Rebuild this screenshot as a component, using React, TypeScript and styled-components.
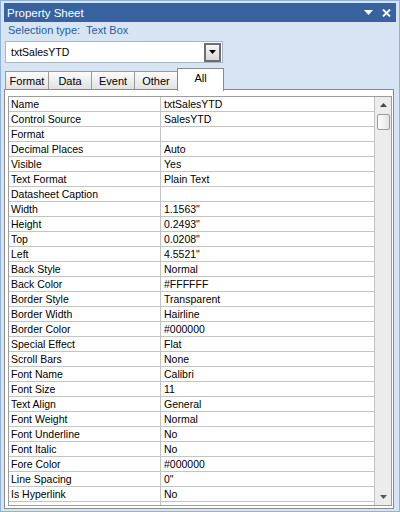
import styled, { createGlobalStyle } from "styled-components";

const GlobalStyle = createGlobalStyle`
  html, body {
    margin: 0;
    padding: 0;
    background: #d7e4f3;
  }
  * {
    box-sizing: border-box;
  }
`;

const properties: [string, string][] = [
  ["Name", "txtSalesYTD"],
  ["Control Source", "SalesYTD"],
  ["Format", ""],
  ["Decimal Places", "Auto"],
  ["Visible", "Yes"],
  ["Text Format", "Plain Text"],
  ["Datasheet Caption", ""],
  ["Width", '1.1563"'],
  ["Height", '0.2493"'],
  ["Top", '0.0208"'],
  ["Left", '4.5521"'],
  ["Back Style", "Normal"],
  ["Back Color", "#FFFFFF"],
  ["Border Style", "Transparent"],
  ["Border Width", "Hairline"],
  ["Border Color", "#000000"],
  ["Special Effect", "Flat"],
  ["Scroll Bars", "None"],
  ["Font Name", "Calibri"],
  ["Font Size", "11"],
  ["Text Align", "General"],
  ["Font Weight", "Normal"],
  ["Font Underline", "No"],
  ["Font Italic", "No"],
  ["Fore Color", "#000000"],
  ["Line Spacing", '0"'],
  ["Is Hyperlink", "No"],
  ["", ""],
];

const tabs = ["Format", "Data", "Event", "Other", "All"];

const Window = styled.div`
  width: 400px;
  height: 512px;
  border: 1px solid #8fb1de;
  background: #d7e4f3;
  padding: 2px 3px 2px 3px;
  display: flex;
  flex-direction: column;
  font-family: "Liberation Sans", Arial, sans-serif;
  overflow: hidden;
`;

const TitleBar = styled.div`
  flex-shrink: 0;
  height: 19px;
  background: #3863a0;
  color: #ffffff;
  display: flex;
  align-items: center;
  padding: 0 3px 0 3px;
  font-size: 11.5px;
`;

const TitleText = styled.span`
  flex: 1;
`;

const TitleIcons = styled.div`
  display: flex;
  align-items: center;
  gap: 9px;
  padding-right: 2px;
`;

const SelectionLine = styled.div`
  flex-shrink: 0;
  height: 16px;
  display: flex;
  align-items: center;
  padding-left: 4px;
  font-size: 11px;
  color: #2b5b9b;
  white-space: pre;
`;

const Combo = styled.div`
  flex-shrink: 0;
  margin: 3px 0 0 1px;
  width: 218px;
  height: 22px;
  border: 1px solid #a9b4c2;
  background: #ffffff;
  display: flex;
  align-items: center;
  padding: 1px 1px 1px 5px;
`;

const ComboText = styled.span`
  flex: 1;
  font-size: 10.5px;
  color: #000;
`;

const ComboButton = styled.div`
  width: 17px;
  height: 19px;
  border: 2px solid #6e6e6e;
  background: linear-gradient(#f6f6f6, #d9d9d9);
  display: flex;
  align-items: center;
  justify-content: center;
`;

const TabRow = styled.div`
  flex-shrink: 0;
  margin-top: 4px;
  height: 23px;
  display: flex;
  align-items: flex-end;
  padding-left: 1px;
  position: relative;
  z-index: 1;
`;

const Tab = styled.div<{ $active?: boolean }>`
  width: ${({ $active }) => ($active ? "47px" : "44px")};
  height: ${({ $active }) => ($active ? "23px" : "19px")};
  margin-bottom: ${({ $active }) => ($active ? "-1px" : "0")};
  border: 1px solid ${({ $active }) => ($active ? "#8a8a8a" : "#9a9a9a")};
  border-bottom: ${({ $active }) => ($active ? "none" : "1px solid #8a8a8a")};
  background: ${({ $active }) =>
    $active ? "#ffffff" : "linear-gradient(#fbfbfb, #e2e2e2)"};
  font-size: 11px;
  color: #000;
  display: flex;
  align-items: ${({ $active }) => ($active ? "flex-start" : "center")};
  padding-top: ${({ $active }) => ($active ? "3px" : "0")};
  justify-content: center;
  margin-right: -1px;
`;

const Panel = styled.div`
  flex: 1;
  min-height: 0;
  margin: -1px 2px 0 0;
  border: 1px solid #8a8a8a;
  background: #ffffff;
  padding: 6px 1px 2px 3px;
  display: flex;
`;

const GridBox = styled.div`
  flex: 1;
  border: 1px solid #9c9c9c;
  display: flex;
  overflow: hidden;
`;

const Rows = styled.div`
  flex: 1;
  border-right: 1px solid #c4c4c4;
  overflow: hidden;
`;

const Row = styled.div`
  display: grid;
  grid-template-columns: 152px 1fr;
  height: 15px;
  border-bottom: 1px solid #c4c4c4;
  font-size: 10.5px;
  color: #000;
  line-height: 14px;
`;

const Label = styled.div`
  padding-left: 2px;
  border-right: 1px solid #c4c4c4;
  white-space: nowrap;
  overflow: hidden;
`;

const Value = styled.div`
  padding-left: 3px;
  white-space: nowrap;
  overflow: hidden;
`;

const ScrollBar = styled.div`
  width: 16px;
  background: #ececec;
  display: flex;
  flex-direction: column;
  align-items: center;
`;

const ArrowBox = styled.div`
  height: 16px;
  width: 16px;
  display: flex;
  align-items: center;
  justify-content: center;
`;

const Thumb = styled.div`
  width: 13px;
  height: 16px;
  margin-top: 1px;
  border: 1px solid #9a9a9a;
  border-radius: 2px;
  background: linear-gradient(90deg, #fdfdfd, #e4e4e4);
`;

const Spacer = styled.div`
  flex: 1;
`;

export default function App() {
  return (
    <>
      <GlobalStyle />
      <Window>
        <TitleBar>
          <TitleText>Property Sheet</TitleText>
          <TitleIcons>
            <svg width="9" height="5" viewBox="0 0 9 5">
              <polygon points="0,0 9,0 4.5,5" fill="#fff" />
            </svg>
            <svg width="9" height="8" viewBox="0 0 9 8">
              <path d="M1 0.5 L8 7.5 M8 0.5 L1 7.5" stroke="#fff" strokeWidth="1.8" />
            </svg>
          </TitleIcons>
        </TitleBar>
        <SelectionLine>{"Selection type:  Text Box"}</SelectionLine>
        <Combo>
          <ComboText>txtSalesYTD</ComboText>
          <ComboButton>
            <svg width="7" height="4" viewBox="0 0 7 4">
              <polygon points="0,0 7,0 3.5,4" fill="#000" />
            </svg>
          </ComboButton>
        </Combo>
        <TabRow>
          {tabs.map((t) => (
            <Tab key={t} $active={t === "All"}>
              {t}
            </Tab>
          ))}
        </TabRow>
        <Panel>
          <GridBox>
            <Rows>
              {properties.map(([label, value], i) => (
                <Row key={i}>
                  <Label>{label}</Label>
                  <Value>{value}</Value>
                </Row>
              ))}
            </Rows>
            <ScrollBar>
              <ArrowBox>
                <svg width="7" height="4" viewBox="0 0 7 4">
                  <polygon points="3.5,0 7,4 0,4" fill="#444" />
                </svg>
              </ArrowBox>
              <Thumb />
              <Spacer />
              <ArrowBox>
                <svg width="7" height="4" viewBox="0 0 7 4">
                  <polygon points="0,0 7,0 3.5,4" fill="#555" />
                </svg>
              </ArrowBox>
            </ScrollBar>
          </GridBox>
        </Panel>
      </Window>
    </>
  );
}
